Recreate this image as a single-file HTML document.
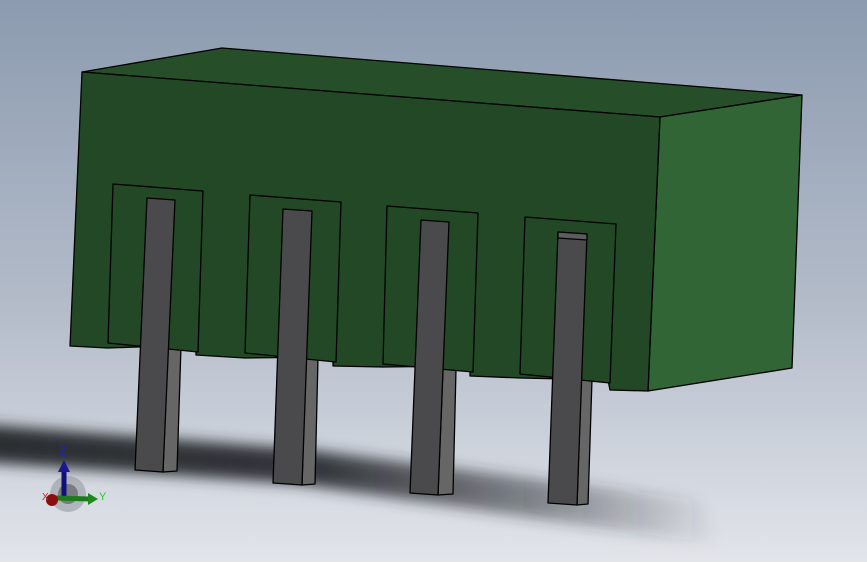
<!DOCTYPE html><html><head><style>html,body{margin:0;padding:0;width:867px;height:562px;overflow:hidden}</style></head><body>
<svg width="867" height="562" viewBox="0 0 867 562" xmlns="http://www.w3.org/2000/svg">
<defs>
<linearGradient id="bg" x1="0" y1="0" x2="0" y2="1"><stop offset="0" stop-color="#8c9bb0"/><stop offset="0.55" stop-color="#b4bcca"/><stop offset="1" stop-color="#e2e5ea"/></linearGradient>
<linearGradient id="sh" x1="0" y1="0" x2="1" y2="0"><stop offset="0" stop-color="#2a2d32" stop-opacity="1"/><stop offset="0.45" stop-color="#2a2d32" stop-opacity="0.95"/><stop offset="0.75" stop-color="#2a2d32" stop-opacity="0.5"/><stop offset="1" stop-color="#2a2d32" stop-opacity="0"/></linearGradient>
<filter id="bl" x="-20%" y="-50%" width="140%" height="200%"><feGaussianBlur stdDeviation="7"/></filter>
</defs>
<rect width="867" height="562" fill="url(#bg)"/>
<polygon points="-20,424 300,449 700,500 720,545 300,484 -20,462" fill="url(#sh)" filter="url(#bl)"/>
<g stroke="#000" stroke-width="1.3" stroke-linejoin="round">
<polygon points="168,345 181,346 177,471 163,472" fill="#666"/>
<polygon points="306,357 318,358 315,484 302,485" fill="#666"/>
<polygon points="443,368 456,369 453,494 438,495" fill="#666"/>
<polygon points="581,378 592,379 588,504 577,505" fill="#666"/>
<polygon points="82,72 222,48 802,95 660,117" fill="#264f29"/>
<polygon points="660,117 802,95 792,368 648,391" fill="#316535"/>
<polygon points="82,72 660,117 648,391 610,390 608,380 520,378 470,376 470,366 383,367 333,366 333,357 245,358 196,355 196,345 107,348 70,346" fill="#234826"/>
<g fill="#234826">
<polygon points="113,184 203,191 198,352 108,343"/>
<polygon points="250,195 341,202 336,362 245,353"/>
<polygon points="387,206 478,213 473,372 383,364"/>
<polygon points="525,217 616,224 610,383 520,374"/>
</g>
<g fill="#4a4a4c">
<polygon points="147,198 175,200 163,472 135,470"/>
<polygon points="283,209 312,211 302,485 273,483"/>
<polygon points="421,220 449,222 438,495 410,493"/>
<polygon points="558,232 587,234 577,505 548,503"/>
</g>
<polygon points="558,232 587,234 587,240 558,238" fill="#5c5c5e"/>
</g>
<circle cx="68" cy="494" r="18" fill="#8a8f98" opacity="0.5"/>
<circle cx="68" cy="494" r="10" fill="#555" opacity="0.6"/>
<line x1="64" y1="498" x2="64" y2="470" stroke="#10107a" stroke-width="5"/>
<polygon points="58,472 70,472 64,460" fill="#1a1a90"/>
<line x1="56" y1="498" x2="90" y2="499" stroke="#1e7a1e" stroke-width="5"/>
<polygon points="88,493 98,499 88,505" fill="#1e8a1e"/>
<circle cx="52" cy="500" r="6" fill="#8a0e0e"/>
<text x="59" y="455" font-family="Liberation Sans,sans-serif" font-size="12" fill="#2020c0">Z</text>
<text x="99" y="500" font-family="Liberation Sans,sans-serif" font-size="11" fill="#20d020">Y</text>
<text x="42" y="500" font-family="Liberation Sans,sans-serif" font-size="10" fill="#e02020">X</text>
</svg>
</body></html>
